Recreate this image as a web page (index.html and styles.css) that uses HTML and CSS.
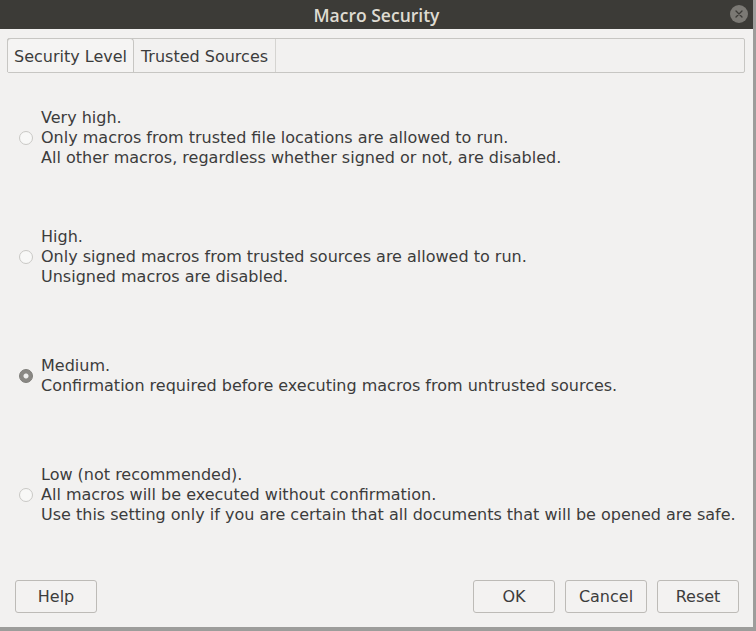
FILE: index.html
```html
<!DOCTYPE html>
<html>
<head>
<meta charset="utf-8">
<link rel="stylesheet" href="styles.css">
</head>
<body>
<div class="screen">
  <div class="dialog">
    <div class="titlebar">
      <span class="title">Macro Security</span>
      <span class="close">
        <svg width="18" height="18" viewBox="0 0 18 18"><circle cx="9" cy="9" r="9" fill="#7b7974"/><path d="M6 6 L12 12 M12 6 L6 12" stroke="#3c3b37" stroke-width="1.3" stroke-linecap="round"/></svg>
      </span>
    </div>
    <div class="tabs">
      <div class="tab active">Security Level</div>
      <div class="tab second">Trusted Sources</div>
    </div>
    <div class="levels">
      <div class="level">
        <span class="radio"></span>
        <div class="text"><div>Very high.</div><div>Only macros from trusted file locations are allowed to run.</div><div>All other macros, regardless whether signed or not, are disabled.</div></div>
      </div>
      <div class="level">
        <span class="radio"></span>
        <div class="text"><div>High.</div><div>Only signed macros from trusted sources are allowed to run.</div><div>Unsigned macros are disabled.</div></div>
      </div>
      <div class="level">
        <span class="radio checked"></span>
        <div class="text"><div>Medium.</div><div>Confirmation required before executing macros from untrusted sources.</div></div>
      </div>
      <div class="level">
        <span class="radio"></span>
        <div class="text"><div>Low (not recommended).</div><div>All macros will be executed without confirmation.</div><div>Use this setting only if you are certain that all documents that will be opened are safe.</div></div>
      </div>
    </div>
    <div class="buttons">
      <button class="btn">Help</button>
      <div class="spacer"></div>
      <button class="btn">OK</button>
      <button class="btn">Cancel</button>
      <button class="btn">Reset</button>
    </div>
  </div>
</div>
</body>
</html>
```
FILE: styles.css
```css
html, body {
  margin: 0;
  padding: 0;
  background: #9d9d9b;
  overflow: hidden;
}
.screen {
  width: 756px;
  height: 631px;
  display: flex;
}
.dialog {
  width: 753px;
  height: 627px;
  background: #f2f1f0;
  display: flex;
  flex-direction: column;
  font-family: "DejaVu Sans", "Open Sans", sans-serif;
  color: #3c3c3c;
}
.titlebar {
  height: 29px;
  background: #3c3b37;
  position: relative;
  display: flex;
  align-items: center;
  justify-content: center;
}
.title {
  color: #dfdbd2;
  font-family: "Open Sans", sans-serif;
  font-weight: 600;
  font-size: 17.5px;
}
.close {
  position: absolute;
  right: 5px;
  top: 5px;
  width: 18px;
  height: 18px;
  display: flex;
}
.tabs {
  margin: 9px 8px 0 7px;
  height: 33px;
  border: 1px solid #c7c6c3;
  border-radius: 2px;
  display: flex;
  align-items: stretch;
}
.tab {
  font-size: 16px;
  display: flex;
  align-items: center;
  justify-content: center;
  border-right: 1px solid #d5d4d1;
  color: #3c3c3c;
  box-sizing: border-box;
  padding-top: 1px;
}
.tab.active {
  width: 127px;
  margin-top: -1px;
  border: 1px solid #c7c6c3;
  border-bottom: none;
  border-radius: 4px 4px 0 0;
  background: #f5f4f3;
  margin-left: -1px;
}
.tab.second {
  width: 142px;
}
.levels {
  margin-top: 5px;
  display: grid;
  grid-template-rows: repeat(4, 119px);
}
.level {
  display: flex;
  align-items: center;
  padding-left: 19px;
}
.radio {
  width: 14px;
  height: 14px;
  border-radius: 50%;
  border: 1px solid #c9c8c5;
  background: #f8f8f7;
  box-sizing: border-box;
  margin-right: 8px;
  flex: none;
}
.radio.checked {
  border: 1px solid #7d7b77;
  background: radial-gradient(circle, #efeeed 0, #efeeed 2px, #8a8884 3px, #8a8884 100%);
}
.text {
  font-size: 16px;
  line-height: 20px;
  color: #3c3c3c;
}
.buttons {
  margin-top: auto;
  margin-bottom: 14px;
  padding: 0 14px 0 15px;
  display: flex;
  gap: 10px;
}
.spacer { flex: 1; }
.btn {
  width: 82px;
  height: 33px;
  border: 1px solid #bdbbb7;
  border-radius: 3px;
  background: #f3f2f1;
  font-family: "DejaVu Sans", "Open Sans", sans-serif;
  font-size: 16px;
  color: #3c3c3c;
  padding: 0;
}
```
